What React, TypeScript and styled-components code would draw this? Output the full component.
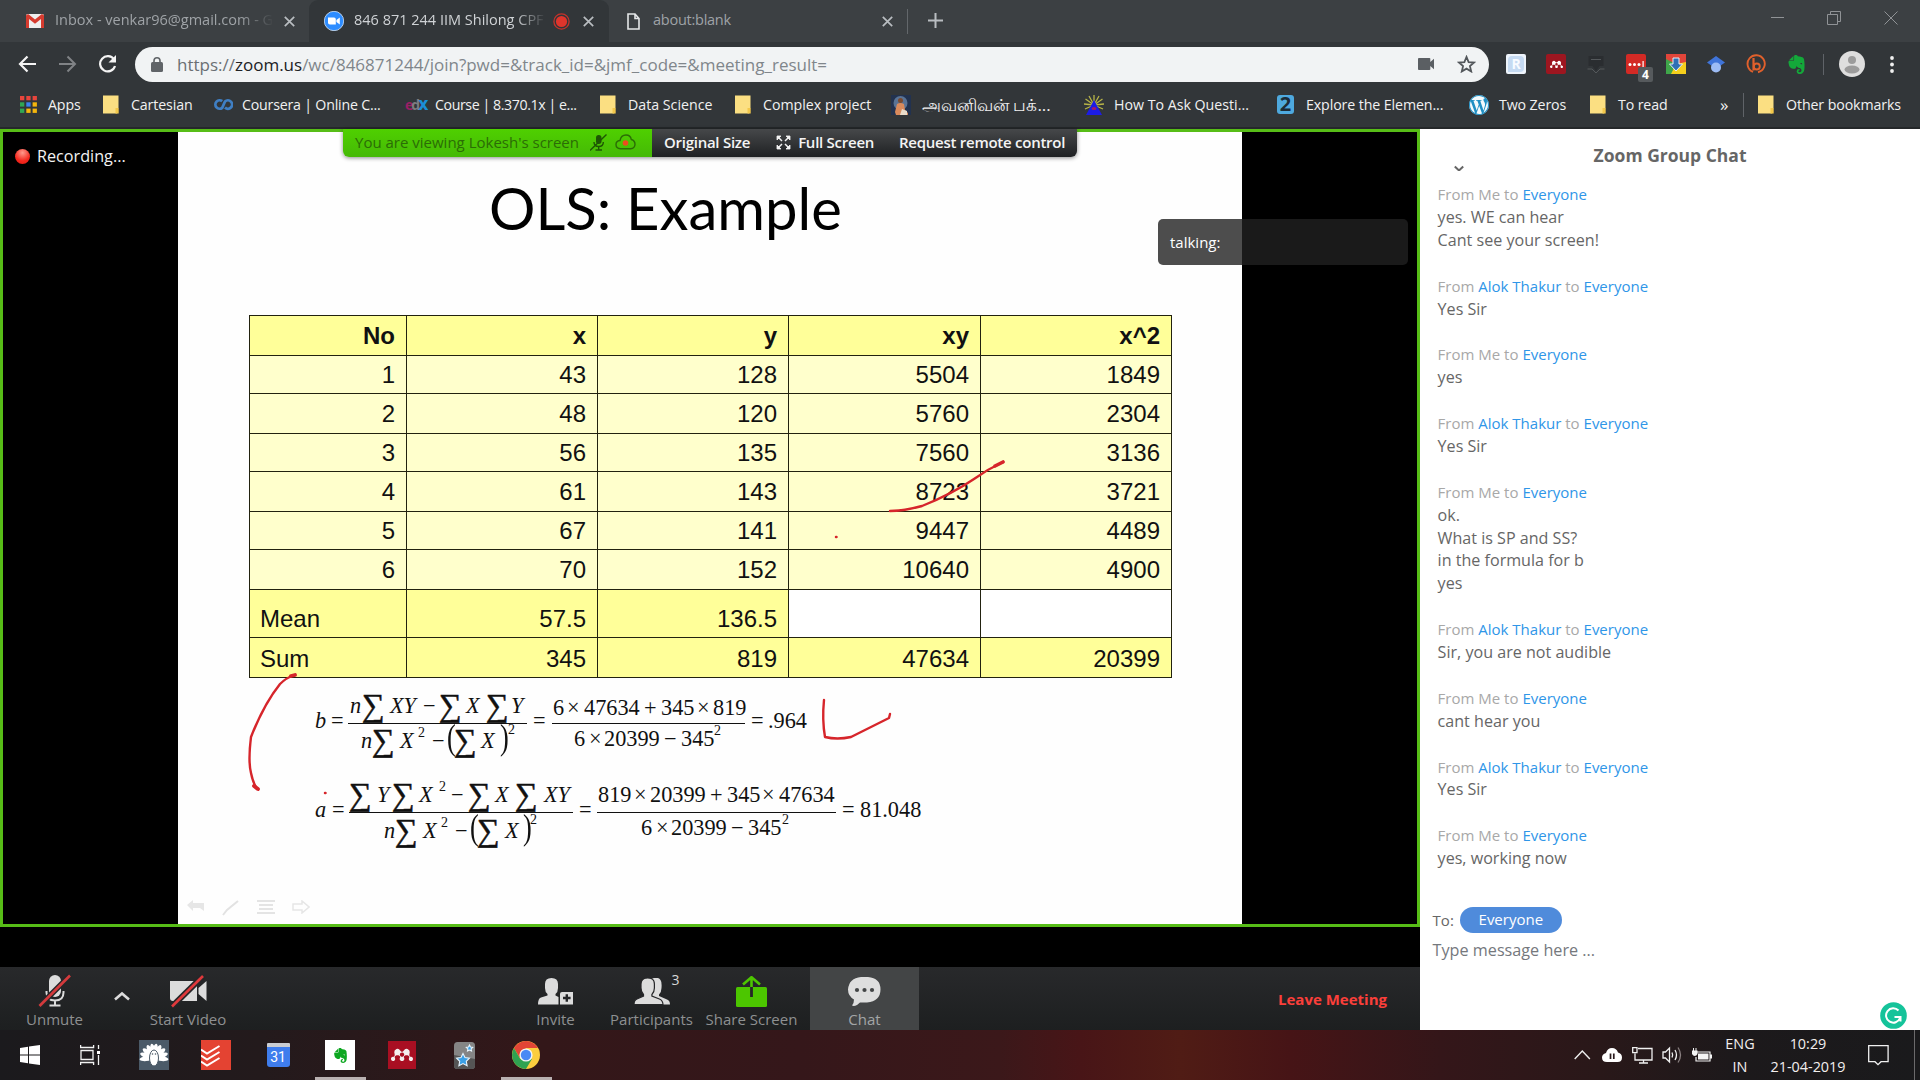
import React from 'react';
import styled, { createGlobalStyle, css } from 'styled-components';
import { SiEvernote, SiMendeley, SiWordpress } from 'react-icons/si';

const Global = createGlobalStyle`
  * { box-sizing: border-box; }
  html, body { margin: 0; background: #000; }
  body { font-family: "Open Sans", "Noto Sans", sans-serif; overflow: hidden; }
  svg { display: block; flex: none; }
`;

const Screen = styled.div`
  width: 1920px;
  height: 1080px;
  display: flex;
  flex-direction: column;
  overflow: hidden;
  white-space: nowrap;
`;

/* ---------- Browser chrome ---------- */
const TabStrip = styled.div`
  height: 42px;
  background: #3c4043;
  display: flex;
  align-items: flex-start;
  flex: none;
`;
const Tab = styled.div<{ $w: number; $active?: boolean; $pad: number }>`
  width: ${p => p.$w}px;
  height: 42px;
  padding-left: ${p => p.$pad}px;
  display: flex;
  align-items: center;
  color: ${p => (p.$active ? '#cfd2d5' : '#9fa3a7')};
  background: ${p => (p.$active ? '#323639' : '#3c4043')};
  ${p => p.$active && css`border-radius: 9px 9px 0 0;`}
`;
const TabLabel = styled.span<{ $w: number; $gap: number; $fade?: boolean; $ls?: number }>`
  width: ${p => p.$w}px;
  margin-left: ${p => p.$gap}px;
  font-size: 14.5px;
  letter-spacing: ${p => p.$ls || 0}px;
  line-height: 40px;
  height: 42px;
  overflow: hidden;
  ${p => p.$fade && css`mask-image: linear-gradient(90deg, #000 84%, transparent 100%);`}
`;
const Spacer = styled.span<{ $w?: number }>`
  ${p => (p.$w === undefined ? 'flex: 1;' : `width: ${p.$w}px; flex: none;`)}
`;
const TabDivider = styled.span`
  width: 1px;
  height: 25px;
  margin-top: 9px;
  background: #63676b;
`;
const NewTab = styled.span`
  margin: 13px 0 0 20px;
`;
const WindowButtons = styled.div`
  margin: 11px 22px 0 0;
  display: flex;
  gap: 43px;
  align-items: center;
`;

const NavBar = styled.div`
  height: 44px;
  background: #323639;
  display: flex;
  align-items: center;
  padding-left: 18px;
  flex: none;
`;
const NavIcons = styled.div`
  display: flex;
  gap: 21px;
  width: 117px;
  align-items: center;
`;
const AddressBar = styled.div`
  width: 1354px;
  height: 35px;
  border-radius: 18px;
  background: #f1f3f4;
  display: flex;
  align-items: center;
  padding: 0 13px 0 16px;
`;
const Url = styled.span`
  margin-left: 14px;
  flex: 1;
  font-size: 17px;
  line-height: 33px;
  color: #80868b;
  b { font-weight: 400; color: #202124; }
  i { font-style: normal; color: #6a6f73; }
`;
const AddressIcons = styled.span`
  display: flex;
  gap: 23px;
  align-items: center;
`;
const Extensions = styled.div`
  display: flex;
  margin-left: 7px;
`;
const ExtSlot = styled.span`
  width: 40px;
  height: 35px;
  position: relative;
  display: grid;
  place-items: center;
`;
const ExtTile = styled.span<{ $bg: string; $fg: string }>`
  width: 20px;
  height: 20px;
  border-radius: 2px;
  background: ${p => p.$bg};
  color: ${p => p.$fg};
  display: grid;
  place-items: center;
`;
const Rounded = styled.span`
  width: 16px;
  height: 16px;
  border-radius: 4px 4px 4px 0;
  background: #c5daf2;
  color: #f8fbff;
  font: 700 14px/15px "Open Sans", sans-serif;
  text-align: center;
`;
const ExtBadge = styled.span`
  position: absolute;
  left: 22px;
  top: 20px;
  width: 15px;
  height: 15px;
  border-radius: 2px;
  background: #565a5d;
  color: #fff;
  font: 700 12px/15px "Open Sans", sans-serif;
  text-align: center;
`;
const VRule = styled.span<{ $h: number; $mx: number }>`
  width: 1px;
  height: ${p => p.$h}px;
  margin: 0 ${p => p.$mx}px;
  background: #5f6368;
`;

const BookmarkBar = styled.div`
  height: 43px;
  background: #323639;
  border-bottom: 2px solid #25282a;
  padding: 0 0 4px 20px;
  display: flex;
  align-items: center;
  flex: none;
`;
const Bookmark = styled.div<{ $w: number }>`
  width: ${p => p.$w}px;
  display: flex;
  align-items: center;
  color: #f1f1f1;
`;
const BookmarkLabel = styled.span<{ $gap: number; $size?: number; $ls?: number }>`
  margin-left: ${p => p.$gap}px;
  font-size: ${p => p.$size || 14.2}px;
  letter-spacing: ${p => p.$ls ?? -0.12}px;
  line-height: 24px;
`;
const EdxMark = styled.span`
  width: 20px;
  font: 700 14px/20px "Open Sans", sans-serif;
  letter-spacing: -2px;
  color: #9b1f66;
  i { font-style: normal; color: #7a7c80; }
  b { color: #1b8fd6; }
`;
const TwoMark = styled.span`
  width: 17px;
  height: 19px;
  border-radius: 3px;
  background: #4ea9de;
  color: #1c2c38;
  font: 700 20px/18px "Open Sans", sans-serif;
  text-align: center;
`;

/* ---------- Meeting page ---------- */
const Page = styled.div`
  height: 901px;
  display: flex;
  flex: none;
`;
const Meeting = styled.div`
  width: 1420px;
  display: flex;
  flex-direction: column;
  background: #000;
`;
const Stage = styled.div`
  position: relative;
  height: 798px;
  border: 3px solid #57bd17;
  display: flex;
  background: #000;
`;
const Recording = styled.div`
  width: 175px;
  height: 48px;
  padding-left: 12px;
  display: flex;
  align-items: center;
  gap: 7px;
  color: #f2f2f2;
  font-size: 16.2px;
`;
const RecDot = styled.span`
  width: 15px;
  height: 15px;
  border-radius: 50%;
  background: radial-gradient(circle at 50% 25%, #ff9a8c, #f5281e 60%, #e01a12);
`;
const ShareBar = styled.div`
  position: absolute;
  left: 340px;
  top: -3px;
  height: 28px;
  display: flex;
  border-radius: 0 0 6px 6px;
  overflow: hidden;
  box-shadow: 0 1px 4px rgba(0, 0, 0, 0.45);
  font-size: 15px;
  line-height: 26px;
`;
const ShareStatus = styled.div`
  width: 309px;
  padding: 0 0 2px 12px;
  display: flex;
  align-items: center;
  background: linear-gradient(#4fd000, #45b906);
  color: #2b6d06;
`;
const ShareActions = styled.div`
  width: 425px;
  padding: 0 0 2px 12px;
  display: flex;
  align-items: center;
  background: linear-gradient(#46484a, #1f2123);
  color: #f4f4f4;
  font-weight: 600;
  letter-spacing: -0.26px;
`;
const Talking = styled.div`
  position: absolute;
  left: 1155px;
  top: 87px;
  width: 250px;
  height: 46px;
  padding-left: 12px;
  border-radius: 5px;
  background: rgba(32, 32, 32, 0.8);
  color: #fff;
  font-size: 15px;
  line-height: 46px;
`;

/* ---------- Slide ---------- */
const Slide = styled.div`
  position: relative;
  width: 1064px;
  height: 792px;
  padding: 41px 70px 0 71px;
  background: #fefefe;
`;
const SlideTitle = styled.h1`
  margin: 0 0 72px 240px;
  font: 400 58px/70px Lato, "Open Sans", sans-serif;
  color: #000;
`;
const DataTable = styled.div`
  display: grid;
  grid-template-columns: 157px 191px 191px 192px 191px;
  grid-template-rows: 40px 38px 40px 38px 40px 38px 40px 48px 40px;
  width: 923px;
  border: solid #22220f;
  border-width: 1px 0 0 1px;
`;
const Cell = styled.div<{ $tone: 'head' | 'body' | 'blank'; $left?: boolean; $bold?: boolean; $drop?: number }>`
  border: solid #22220f;
  border-width: 0 1px 1px 0;
  padding: ${p => p.$drop || 0}px 11px 0 10px;
  display: flex;
  align-items: center;
  justify-content: ${p => (p.$left ? 'flex-start' : 'flex-end')};
  background: ${p => ({ head: '#ffff99', body: '#ffffcc', blank: '#ffffff' })[p.$tone]};
  font: ${p => (p.$bold ? 700 : 400)} 24px/36px "Liberation Sans", Arial, sans-serif;
  color: #111;
`;
const Formulas = styled.div`
  padding: 11px 0 0 66px;
  font: 22.3px/34px "Liberation Serif", "Times New Roman", serif;
  color: #111;
`;
const Equation = styled.div`
  height: 89px;
  display: flex;
`;
const Term = styled.span<{ $w: number }>`
  width: ${p => p.$w}px;
  margin-top: 15px;
`;
const Fraction = styled.div<{ $w: number; $gap: number }>`
  width: ${p => p.$w}px;
  margin-right: ${p => p.$gap}px;
`;
const Numerator = styled.div<{ $pad: number; $drop: number }>`
  height: 35px;
  padding: ${p => p.$drop}px 0 0 ${p => p.$pad}px;
  border-bottom: 1px solid #111;
  display: flex;
`;
const Denominator = styled.div<{ $pad: number; $rise: number }>`
  height: 34px;
  margin-top: ${p => -p.$rise}px;
  padding-left: ${p => p.$pad}px;
  display: flex;
`;
const Tok = styled.span<{ $w: number; $k?: string }>`
  width: ${p => p.$w}px;
  flex: none;
  height: 34px;
  ${p => p.$k === 'i' && css`font-style: italic;`}
  ${p => p.$k === 's' && css`font-size: 32px; line-height: 32px; -webkit-text-stroke: 0.5px #111;`}
  ${p => p.$k === 'p' && css`font-size: 35px; line-height: 28px; transform: scaleX(0.75); transform-origin: 0 0;`}
  ${p => p.$k === '2' && css`font-size: 14px; line-height: 17px;`}
  ${p => p.$k === '^' && css`font-size: 14px; line-height: 11px;`}
`;
const Ink = styled.svg`
  position: absolute;
  left: 0;
  top: 0;
`;
const SlideNav = styled.div`
  position: absolute;
  left: 9px;
  bottom: 8px;
  display: flex;
  gap: 17px;
`;

/* ---------- Meeting toolbar ---------- */
const Controls = styled.div`
  height: 63px;
  margin-top: 40px;
  display: flex;
  background: linear-gradient(#28292b, #1d1f20);
`;
const Control = styled.div<{ $w: number; $active?: boolean; $ml?: number }>`
  position: relative;
  width: ${p => p.$w}px;
  margin-left: ${p => p.$ml || 0}px;
  padding-top: 6px;
  display: flex;
  flex-direction: column;
  align-items: center;
  background: ${p => (p.$active ? '#434546' : 'transparent')};
  color: ${p => (p.$active ? '#a3a5a6' : '#8e9091')};
`;
const ControlIcon = styled.div`
  height: 36px;
  display: flex;
  align-items: center;
`;
const ControlLabel = styled.span`
  font-size: 15px;
  line-height: 21px;
`;
const Count = styled.span`
  position: absolute;
  left: 70px;
  top: 3px;
  color: #d8d8d8;
  font-size: 14px;
  line-height: 20px;
`;
const Leave = styled.span`
  margin: 0 33px 0 auto;
  color: #fb3f3a;
  font-size: 15px;
  font-weight: 700;
  line-height: 65px;
`;

/* ---------- Chat ---------- */
const Chat = styled.div`
  width: 500px;
  padding: 0 0 0 17.6px;
  background: #fff;
  display: flex;
  flex-direction: column;
`;
const ChatHeader = styled.div`
  height: 54px;
  display: flex;
`;
const ChatTitle = styled.span`
  margin-left: 130px;
  font-size: 17.5px;
  font-weight: 700;
  line-height: 52px;
  color: #666;
`;
const Message = styled.div`
  margin-bottom: 22.9px;
  color: #666;
  font-size: 16.1px;
  line-height: 22.9px;
`;
const From = styled.div`
  color: #a8a8a8;
  font-size: 15px;
  line-height: 22.9px;
  b { font-weight: 400; color: #2f96e8; }
`;
const Recipient = styled.div`
  display: flex;
  align-items: center;
  margin: 13px 0 0 -5px;
  height: 28px;
  font-size: 15px;
  color: #666;
`;
const Pill = styled.span`
  width: 102px;
  height: 26px;
  margin-left: 6px;
  border-radius: 13px;
  background: #4f8bdb;
  color: #fff;
  text-align: center;
  line-height: 25px;
`;
const ChatInput = styled.div`
  margin: 5px 0 0 -5px;
  font-size: 16.2px;
  line-height: 22px;
  color: #75787d;
`;
const Grammar = styled.span`
  margin: auto 13px 1px auto;
`;

/* ---------- Taskbar ---------- */
const Taskbar = styled.div`
  height: 50px;
  display: flex;
  background: linear-gradient(90deg, #1b1a1d 0, #231a1c 260px, #331719 540px, #35171a 800px, #3b181a 1000px, #481517 1080px, #501c15 1180px, #461416 1290px, #341619 1440px, #291819 1600px, #1c191b 1740px, #1a1a1c 1920px);
`;
const TaskSlot = styled.span<{ $w: number; $open?: boolean }>`
  width: ${p => p.$w}px;
  height: 50px;
  display: grid;
  place-items: center;
  ${p => p.$open && css`
    background: linear-gradient(#b9b1b1, #b9b1b1) center bottom / 51px 3px no-repeat;
  `}
`;
const Tile = styled.span<{ $s: number; $bg: string; $fg: string }>`
  width: ${p => p.$s}px;
  height: ${p => p.$s}px;
  display: grid;
  place-items: center;
  background: ${p => p.$bg};
  color: ${p => p.$fg};
`;
const CalendarTile = styled.span`
  width: 23px;
  height: 24px;
  border-top: 4px solid #c9ccd2;
  border-radius: 1px 1px 3px 3px;
  background: #3f7ded;
  color: #fff;
  font: 14px/20px Roboto, "Open Sans", sans-serif;
  text-align: center;
`;
const TrayText = styled.div<{ $w: number }>`
  width: ${p => p.$w}px;
  padding-top: 2px;
  text-align: center;
  color: #f2eeee;
  font-size: 14.4px;
  line-height: 23px;
`;
const EdgeLine = styled.span`
  width: 1px;
  margin-left: 17px;
  background: #6b6a6b;
`;

/* ---------- Drawings ---------- */
const Close = () => (
  <svg width="11" height="11" viewBox="0 0 11 11" stroke="#b9bdc1" strokeWidth="1.7"><path d="M.8.8l9.4 9.4M10.2.8L.8 10.2" /></svg>
);
const Folder = () => (
  <svg width="16" height="19" viewBox="0 0 16 19"><path d="M0 .5h15.500v12.500l-1.200 1v4.500H0z" fill="#fbdf82" /><path d="M12.500 13h3.200v5.500h-3.200z" fill="#f3c84b" /></svg>
);
const GmailIcon = () => (
  <svg width="18" height="14" viewBox="0 0 18 14"><rect width="18" height="14" rx="1.500" fill="#eee" /><path d="M0 1.500v12.500h3V5l6 4.800L15 5v9h3V1.500Q17 0 15.500.3L9 5.500 2.500.3Q1 0 0 1.500z" fill="#d63b2f" /></svg>
);
const ZoomIcon = () => (
  <svg width="20" height="20" viewBox="0 0 20 20"><circle cx="10" cy="10" r="9.700" fill="#2d8cff" stroke="#d7e8fb" strokeWidth=".8" /><path d="M4 6.500h6q1.800 0 1.800 1.800v5.200H5.800Q4 13.500 4 11.700zM12.400 9l3.400-2.500v7l-3.400-2.500z" fill="#fff" /></svg>
);
const CourseraIcon = () => (
  <svg width="19" height="13" viewBox="0 0 19 13" fill="none" stroke="#3f7fc4" strokeWidth="2.800"><path d="M8.200 3.200A4.200 4.200 0 1 0 8.200 9.800L11 3.500A4.200 4.200 0 1 1 11 9.600" /></svg>
);
const GridIcon = () => (
  <svg width="17" height="17" viewBox="0 0 17 17">
    {['#e8453c', '#e8453c', '#e8453c', '#31a753', '#3b82f0', '#f5b60d', '#31a753', '#f5b60d', '#f5b60d'].map((c, i) => (
      <rect key={i} x={(i % 3) * 6.3} y={Math.floor(i / 3) * 6.3} width="4.300" height="4.300" fill={c} />
    ))}
  </svg>
);
const ChromeLogo = () => (
  <svg width="28" height="28" viewBox="0 0 28 28">
    <circle cx="14" cy="14" r="14" fill="#fccd3e" />
    <path d="M14 7h12.100A14 14 0 0 0 1.900 7l6 10z" fill="#e24536" />
    <path d="M1.900 7A14 14 0 0 0 14 28l6.200-10.600L14 20 8 17.500z" fill="#2fa251" />
    <circle cx="14" cy="14" r="6.600" fill="#f4f4f4" /><circle cx="14" cy="14" r="5.200" fill="#4a8af4" />
  </svg>
);
const MicOff = () => (
  <svg width="34" height="34" viewBox="0 0 34 34">
    <rect x="11" y="1" width="12" height="22" rx="6" fill="#dcdcdc" />
    <path d="M8.500 17v1.500q0 8 8.500 8t8.500-8V17M17 26v5M11.500 31.500h11" stroke="#dcdcdc" strokeWidth="2" fill="none" />
    <path d="M1.500 32L32 1.500" stroke="#252628" strokeWidth="5.500" /><path d="M1.500 32L32 1.500" stroke="#d43a3c" strokeWidth="2.600" />
  </svg>
);
const VideoOff = () => (
  <svg width="37" height="33" viewBox="0 0 37 33">
    <path d="M0 6h27v20H3q-3 0-3-3zM28.500 13L36.500 6v20L28.500 19z" fill="#dcdcdc" />
    <path d="M2 31.500L33 1" stroke="#252628" strokeWidth="6" /><path d="M2 31.500L33 1" stroke="#e0393c" strokeWidth="2.600" />
  </svg>
);
const InviteIcon = () => (
  <svg width="36" height="27" viewBox="0 0 36 27" fill="#dcdcdc">
    <path d="M7 6q0-6 6.500-6t6.500 6v4q0 4-2.500 6v1.500l3 1.500v7.500H0q0-6 3-7l6.500-2V16Q7 14 7 10z" />
    <path d="M24 14h11v12.500H22V16q0-2 2-2z" /><path d="M28.800 16.200v7.600M25 20h7.600" stroke="#252628" strokeWidth="2.400" />
  </svg>
);
const PeopleIcon = () => (
  <svg width="36" height="27" viewBox="0 0 36 27" fill="#dcdcdc">
    <path d="M13 1q7-3 9.500 1 1.500 2 1 8 0 4-2.500 6.500V18l8 3.500q3 1 3 5H10z" transform="translate(4 0)" />
    <path d="M7 6q0-6 6.700-6t6.700 6v4q0 4-2.500 6.500V18l7.500 3q3.600 1.500 3.600 5.700H0q0-4.700 3-5.700l6.500-3v-1.500Q7 14 7 10z" stroke="#252628" strokeWidth="1.200" />
  </svg>
);
const ShareIcon = () => (
  <svg width="31" height="31" viewBox="0 0 31 31"><path d="M1.500 11h28q1.500 0 1.500 1.500V29.500q0 1.500-1.500 1.500h-28Q0 31 0 29.500v-17Q0 11 1.500 11z" fill="#4cc600" /><path d="M15.500 11V1.500M7 8.500L15.500 1.200 24 8.500" stroke="#4cc600" strokeWidth="2.600" fill="none" /><path d="M15.500 11v10" stroke="#252628" strokeWidth="2.800" /></svg>
);
const BubbleIcon = () => (
  <svg width="33" height="29" viewBox="0 0 33 29"><path d="M13 0h7q12.500 1 12.500 12.500T19 25.500q-5 0-7 0l-3 2.500q-3 1.500-5 .5 2-2 2-6Q0 19 0 12.500 1 1 13 0z" fill="#dedede" /><g fill="#434546"><circle cx="9" cy="13" r="2.100" /><circle cx="16.500" cy="13" r="2.100" /><circle cx="24" cy="13" r="2.100" /></g></svg>
);

const rows = [
  ['1', '43', '128', '5504', '1849'], ['2', '48', '120', '5760', '2304'], ['3', '56', '135', '7560', '3136'],
  ['4', '61', '143', '8723', '3721'], ['5', '67', '141', '9447', '4489'], ['6', '70', '152', '10640', '4900'],
];

type Token = [string, number, string?];
const Tokens = ({ list }: { list: Token[] }) => <>{list.map(([t, w, k], i) => <Tok key={i} $w={w} $k={k}>{t}</Tok>)}</>;

const messages: { by?: string; lines: string[] }[] = [
  { lines: ['yes. WE can hear', 'Cant see your screen!'] },
  { by: 'Alok Thakur', lines: ['Yes Sir'] },
  { lines: ['yes'] },
  { by: 'Alok Thakur', lines: ['Yes Sir'] },
  { lines: ['ok.', 'What is SP and SS?', 'in the formula for b', 'yes'] },
  { by: 'Alok Thakur', lines: ['Sir, you are not audible'] },
  { lines: ['cant hear you'] },
  { by: 'Alok Thakur', lines: ['Yes Sir'] },
  { lines: ['yes, working now'] },
];

const Browser = () => (
  <>
    <TabStrip>
      <Tab $w={309} $pad={26}>
        <GmailIcon /><TabLabel $w={219} $gap={11} $fade>Inbox - venkar96@gmail.com - G</TabLabel><Spacer $w={10} /><Close />
      </Tab>
      <Tab $w={300} $pad={15} $active>
        <ZoomIcon /><TabLabel $w={192} $gap={10} $fade>846 871 244 IIM Shilong CPF</TabLabel><Spacer $w={7} />
        <svg width="17" height="17" viewBox="0 0 17 17"><circle cx="8.500" cy="8.500" r="7.600" fill="none" stroke="#c5322b" strokeWidth="1.300" /><circle cx="8.500" cy="8.500" r="5.600" fill="#e0352c" /></svg>
        <Spacer $w={13} /><Close />
      </Tab>
      <Tab $w={298} $pad={18}>
        <svg width="13" height="17" viewBox="0 0 13 17"><path d="M1 1h7l4 4.500V16H1zM8 1v4.500h4" fill="none" stroke="#e4e6e8" strokeWidth="1.600" /></svg>
        <TabLabel $w={218} $gap={13} $ls={-0.25}>about:blank</TabLabel><Spacer $w={11} /><Close />
      </Tab>
      <TabDivider />
      <NewTab><svg width="15" height="15" viewBox="0 0 15 15" stroke="#b9bdc1" strokeWidth="2"><path d="M7.500 0v15M0 7.500h15" /></svg></NewTab>
      <Spacer />
      <WindowButtons>
        <svg width="13" height="14" stroke="#909396"><path d="M0 6.500h13" /></svg>
        <svg width="14" height="14" fill="none" stroke="#909396"><path d="M.5 3.500h10v10H.5zM3.500 3V.5h10v10H11" /></svg>
        <svg width="14" height="14" stroke="#909396"><path d="M.5.5l13 13M13.500.5l-13 13" /></svg>
      </WindowButtons>
    </TabStrip>
    <NavBar>
      <NavIcons>
        <svg width="19" height="18" viewBox="0 0 19 18" fill="none" stroke="#f4f4f4" strokeWidth="2.200"><path d="M18 9H2.500M9.500 1.500L2 9l7.500 7.500" /></svg>
        <svg width="19" height="18" viewBox="0 0 19 18" fill="none" stroke="#808386" strokeWidth="2"><path d="M1 9h15.500M9.500 1.500L17 9l-7.500 7.500" /></svg>
        <svg width="19" height="18" viewBox="0 0 19 18" fill="none" stroke="#f4f4f4" strokeWidth="2.200"><path d="M16 4.500A7.600 7.600 0 1 0 17 11" /><path d="M18 0v7.500h-7.500z" fill="#f4f4f4" stroke="none" /></svg>
      </NavIcons>
      <AddressBar>
        <svg width="12" height="15" viewBox="0 0 12 15"><rect y="5" width="12" height="10" rx="1.500" fill="#606468" /><path d="M3 6V3.800a3 3 0 0 1 6 0V6" fill="none" stroke="#606468" strokeWidth="1.600" /></svg>
        <Url><i>https://</i><b>zoom.us</b>/wc/846871244/join?pwd=&amp;track_id=&amp;jmf_code=&amp;meeting_result=</Url>
        <AddressIcons>
          <svg width="16" height="12" viewBox="0 0 16 12" fill="#5b5f63"><path d="M1 0h10.500q.8 0 .8.800V4L16 .8v10.400L12.300 8v3.200q0 .8-.8.800H1q-1 0-1-.8V.8Q0 0 1 0z" /></svg>
          <svg width="19" height="18" viewBox="0 0 24 23" fill="none" stroke="#53575b" strokeWidth="2.300"><path d="M12 2.500l2.700 6.500 7 .6-5.300 4.600 1.600 6.800-6-3.600L6 21l1.600-6.800L2.300 9.600l7-.6z" /></svg>
        </AddressIcons>
      </AddressBar>
      <Extensions>
        <ExtSlot><ExtTile $bg="#eef4fb" $fg="#a9c8ea"><Rounded>R</Rounded></ExtTile></ExtSlot>
        <ExtSlot><ExtTile $bg="#9d1620" $fg="#fff"><SiMendeley size={13} /></ExtTile></ExtSlot>
        <ExtSlot><svg width="18" height="19" viewBox="0 0 18 19"><path d="M1.500 1h15v10h-4L9 16l-3.500-5h-4z" fill="#2a2d30" /><path d="M4 4.500h10M.5 14H5l4 4 4-4h4.500" stroke="#54585b" fill="none" /></svg></ExtSlot>
        <ExtSlot><ExtTile $bg="#d32a25" $fg="#fff"><svg width="16" height="6" fill="#fff"><circle cx="2" cy="3.500" r="1.500" /><circle cx="6.500" cy="3.500" r="1.500" /><circle cx="11" cy="3.500" r="1.500" /><rect x="14.500" width="1.200" height="6" /></svg></ExtTile><ExtBadge>4</ExtBadge></ExtSlot>
        <ExtSlot><svg width="20" height="20" viewBox="0 0 20 20"><rect width="20" height="20" fill="#f5cf1c" /><path d="M0 0h20v8L10 10 0 20z" fill="#e2453a" /><path d="M0 5l10 5-5 10H0z" fill="#3fa64a" /><path d="M7 4h6v6h3.500L10 17 3.500 10H7z" fill="#2f6fb5" stroke="#e8eef5" /></svg></ExtSlot>
        <ExtSlot><svg width="18" height="17" viewBox="0 0 18 17"><path d="M9 0L18 6.500 13 10H5L0 6.500z" fill="#3f74d9" /><circle cx="9" cy="11.500" r="5" fill="#9dbcf5" /></svg></ExtSlot>
        <ExtSlot><svg width="20" height="20" viewBox="0 0 20 20" fill="none" stroke="#e0602c" strokeWidth="1.900"><path d="M7 17.800A8.600 8.600 0 1 1 12 18.200" /><path d="M7.500 4v12.500" strokeWidth="2.200" /><circle cx="10.800" cy="12.500" r="3" /></svg></ExtSlot>
        <ExtSlot><SiEvernote size={19} color="#14a83a" /></ExtSlot>
      </Extensions>
      <VRule $h={21} $mx={7} />
      <Spacer $w={8} />
      <svg width="26" height="26" viewBox="0 0 26 26"><circle cx="13" cy="13" r="13" fill="#dedede" /><circle cx="13" cy="9" r="4" fill="#9b9b9b" /><ellipse cx="13" cy="18.500" rx="7.500" ry="4" fill="#9b9b9b" /></svg>
      <Spacer $w={25} />
      <svg width="4" height="17" fill="#f0f0f0"><circle cx="2" cy="2" r="1.900" /><circle cx="2" cy="8.500" r="1.900" /><circle cx="2" cy="15" r="1.900" /></svg>
    </NavBar>
    <BookmarkBar>
      <Bookmark $w={83}><GridIcon /><BookmarkLabel $gap={11}>Apps</BookmarkLabel></Bookmark>
      <Bookmark $w={111}><Folder /><BookmarkLabel $gap={12}>Cartesian</BookmarkLabel></Bookmark>
      <Bookmark $w={191}><CourseraIcon /><BookmarkLabel $gap={9} $ls={-0.2}>Coursera | Online C...</BookmarkLabel></Bookmark>
      <Bookmark $w={195}><EdxMark>e<i>d</i><b>X</b></EdxMark><BookmarkLabel $gap={10} $ls={-0.42}>Course | 8.370.1x | e...</BookmarkLabel></Bookmark>
      <Bookmark $w={135}><Folder /><BookmarkLabel $gap={12} $ls={0}>Data Science</BookmarkLabel></Bookmark>
      <Bookmark $w={156}><Folder /><BookmarkLabel $gap={12} $ls={0}>Complex project</BookmarkLabel></Bookmark>
      <Bookmark $w={193}>
        <svg width="20" height="20" viewBox="0 0 20 20"><rect width="20" height="20" fill="#22324f" /><circle cx="9.500" cy="8" r="7" fill="#7f9fc4" opacity=".6" /><circle cx="9.500" cy="5.500" r="2.500" fill="#7a4a30" /><path d="M6 9q3.500-2 7 0l1 6 3 3v2H5l-1-3z" fill="#d98a5c" /><path d="M11 14l5 2v4H9z" fill="#e9dccb" /></svg>
        <BookmarkLabel $gap={11} $size={16.9} $ls={0}>அவனிவன் பக்...</BookmarkLabel>
      </Bookmark>
      <Bookmark $w={193}>
        <svg width="20" height="20" viewBox="0 0 20 20"><g stroke="#b8b548" strokeWidth="1.300"><path d="M10 10V0M10 10L5 1M10 10L15 1M10 10L1.500 4M10 10L18.500 4M10 10L0 9M10 10L20 9M10 10L1 14M10 10L19 14" /></g><path d="M10 5l8 15H2z" fill="#1c1ce6" /><ellipse cx="10" cy="13.500" rx="2.500" ry="1.500" fill="#a3196b" /></svg>
        <BookmarkLabel $gap={10} $ls={0}>How To Ask Questi...</BookmarkLabel>
      </Bookmark>
      <Bookmark $w={192}><TwoMark>2</TwoMark><BookmarkLabel $gap={12} $ls={-0.1}>Explore the Elemen...</BookmarkLabel></Bookmark>
      <Bookmark $w={121}><svg width="20" height="20"><circle cx="10" cy="10" r="10" fill="#f4fafc" /><SiWordpress size={20} color="#1f8fc4" /></svg><BookmarkLabel $gap={10}>Two Zeros</BookmarkLabel></Bookmark>
      <Bookmark $w={130}><Folder /><BookmarkLabel $gap={12}>To read</BookmarkLabel></Bookmark>
      <Bookmark $w={16}><BookmarkLabel $gap={0} $size={17}>»</BookmarkLabel></Bookmark>
      <VRule $h={24} $mx={7} />
      <Spacer $w={7} />
      <Bookmark $w={160}><Folder /><BookmarkLabel $gap={12} $ls={-0.1}>Other bookmarks</BookmarkLabel></Bookmark>
    </BookmarkBar>
  </>
);

const SlideView = () => (
  <Slide>
    <SlideTitle>OLS: Example</SlideTitle>
    <DataTable>
      {['No', 'x', 'y', 'xy', 'x^2'].map(h => <Cell key={h} $tone="head" $bold>{h}</Cell>)}
      {rows.map(r => r.map((v, i) => <Cell key={r[0] + i} $tone="body">{v}</Cell>))}
      <Cell $tone="head" $left $drop={11}>Mean</Cell>
      <Cell $tone="head" $drop={11}>57.5</Cell>
      <Cell $tone="head" $drop={11}>136.5</Cell>
      <Cell $tone="blank" /><Cell $tone="blank" />
      <Cell $tone="head" $left $drop={2}>Sum</Cell>
      {['345', '819', '47634', '20399'].map(v => <Cell key={v} $tone="head" $drop={2}>{v}</Cell>)}
    </DataTable>
    <Formulas>
      <Equation>
        <Term $w={16}><i>b</i></Term><Term $w={17}>=</Term>
        <Fraction $w={179} $gap={6}>
          <Numerator $pad={2} $drop={0}><Tokens list={[['n', 12, 'i'], ['∑', 28, 's'], ['XY', 33, 'i'], ['−', 16], ['∑', 27, 's'], ['X', 20, 'i'], ['∑', 25, 's'], ['Y', 13, 'i']]} /></Numerator>
          <Denominator $pad={13} $rise={0}><Tokens list={[['n', 11, 'i'], ['∑', 28, 's'], ['X', 18, 'i'], ['2', 14, '2'], ['−', 15], ['(', 7, 'p'], ['∑', 27, 's'], ['X', 19, 'i'], [')', 8, 'p'], ['2', 8, '^']]} /></Denominator>
        </Fraction>
        <Term $w={19}>=</Term>
        <Fraction $w={193} $gap={6}>
          <Numerator $pad={1} $drop={2}><Tokens list={[['6', 14], ['×', 17], ['47634', 60], ['+', 17], ['345', 36], ['×', 16], ['819', 34]]} /></Numerator>
          <Denominator $pad={22} $rise={2}><Tokens list={[['6', 15], ['×', 15], ['20399', 60], ['−', 17], ['345', 33], ['2', 8, '2']]} /></Denominator>
        </Fraction>
        <Term $w={17}>=</Term><Term $w={40}>.964</Term>
      </Equation>
      <Equation>
        <Term $w={17}><i>a</i></Term><Term $w={17}>=</Term>
        <Fraction $w={224} $gap={6}>
          <Numerator $pad={1} $drop={-1}><Tokens list={[['∑', 28, 's'], ['Y', 15, 'i'], ['∑', 27, 's'], ['X', 20, 'i'], ['2', 12, '2'], ['−', 17], ['∑', 27, 's'], ['X', 20, 'i'], ['∑', 29, 's'], ['XY', 30, 'i']]} /></Numerator>
          <Denominator $pad={35} $rise={-1}><Tokens list={[['n', 11, 'i'], ['∑', 28, 's'], ['X', 18, 'i'], ['2', 14, '2'], ['−', 15], ['(', 7, 'p'], ['∑', 28, 's'], ['X', 18, 'i'], [')', 7, 'p'], ['2', 8, '^']]} /></Denominator>
        </Fraction>
        <Term $w={18}>=</Term>
        <Fraction $w={239} $gap={6}>
          <Numerator $pad={1} $drop={0}><Tokens list={[['819', 36], ['×', 16], ['20399', 60], ['+', 17], ['345', 35], ['×', 17], ['47634', 58]]} /></Numerator>
          <Denominator $pad={44} $rise={2}><Tokens list={[['6', 15], ['×', 15], ['20399', 60], ['−', 17], ['345', 34], ['2', 8, '2']]} /></Denominator>
        </Fraction>
        <Term $w={18}>=</Term><Term $w={64}>81.048</Term>
      </Equation>
    </Formulas>
    <Ink width="1064" height="792" viewBox="178 132 1064 792" fill="none" stroke="#d6252b" strokeWidth="2.400" strokeLinecap="round" strokeLinejoin="round">
      <path d="M294 675q-8 3-14 9-16 20-29 53-3 24 0 36 2 10 6 16" />
      <path d="M291 676l4-1M254 786l4 3" strokeWidth="3.800" />
      <path d="M824 700q-2 20 1 37 12 3 26 0l38-19 1-4" />
      <path d="M890 511q14 0 32-5 30-12 52-27 14-10 29-17" />
      <path d="M995 466l8-4" strokeWidth="3.600" />
      <path d="M325 793h.5M836 537h.5" strokeWidth="2.500" />
    </Ink>
    <SlideNav>
      <svg width="18" height="14" fill="#e6e6e6"><path d="M0 5l6-5v3h11v8l-4-3H6v3z" /></svg>
      <svg width="18" height="16" fill="none" stroke="#e2e2e2" strokeWidth="2"><path d="M1 15l4-5L16 1" /></svg>
      <svg width="18" height="14" fill="none" stroke="#e4e4e4" strokeWidth="2"><path d="M0 1h18M2 5h14M2 9h14M0 13h18" /></svg>
      <svg width="18" height="14" fill="none" stroke="#e6e6e6" strokeWidth="1.500"><path d="M1 4h9V1l7 6-7 6v-3H1z" /></svg>
    </SlideNav>
  </Slide>
);

const MeetingView = () => (
  <Meeting>
    <Stage>
      <Recording><RecDot />Recording...</Recording>
      <SlideView />
      <ShareBar>
        <ShareStatus>
          You are viewing Lokesh's screen
          <Spacer $w={11} />
          <svg width="17" height="17" viewBox="0 0 17 17" stroke="#1e5604"><rect x="6" y="1" width="5.500" height="9" rx="2.700" fill="#1e5604" stroke="none" /><path d="M4 8q0 4.500 4.700 4.500T13.300 8M8.700 12.500V16M5.500 16h6.500M0 16.500L16.500.5" fill="none" strokeWidth="1.400" /></svg>
          <Spacer $w={8} />
          <svg width="21" height="16" viewBox="0 0 21 16"><path d="M5.500 14.800Q1 14.500 1 10.500 1 7 5 6.500 6 1 11 1q4.500 0 5.300 4.500Q20 6.500 20 10.300q0 4-4.500 4.500z" fill="none" stroke="#2b6d06" strokeWidth="1.400" /><circle cx="10.500" cy="9" r="2.800" fill="#ee4b1f" /></svg>
        </ShareStatus>
        <ShareActions>
          Original Size
          <Spacer $w={26} />
          <svg width="15" height="15" viewBox="0 0 15 15" fill="#f4f4f4" stroke="#f4f4f4" strokeWidth="1.500"><path d="M1 5V1h4zM10 1h4v4zM14 10v4h-4zM5 14H1v-4z" strokeWidth=".8" /><path d="M2 2l4 4M13 2L9 6M13 13L9 9M2 13l4-4" /></svg>
          <Spacer $w={7} />
          Full Screen
          <Spacer $w={25} />
          Request remote control
        </ShareActions>
      </ShareBar>
      <Talking>talking:</Talking>
    </Stage>
    <Controls>
      <Control $w={109}><ControlIcon><MicOff /></ControlIcon><ControlLabel>Unmute</ControlLabel></Control>
      <Control $w={25}><ControlIcon><svg width="16" height="20" fill="none" stroke="#dcdcdc" strokeWidth="2.600"><path d="M1 18.500l7-6 7 6" /></svg></ControlIcon></Control>
      <Control $w={108}><ControlIcon><VideoOff /></ControlIcon><ControlLabel>Start Video</ControlLabel></Control>
      <Control $w={92} $ml={267.5}><ControlIcon><InviteIcon /></ControlIcon><ControlLabel>Invite</ControlLabel></Control>
      <Control $w={100}><ControlIcon><PeopleIcon /></ControlIcon><Count>3</Count><ControlLabel>Participants</ControlLabel></Control>
      <Control $w={100}><ControlIcon><ShareIcon /></ControlIcon><ControlLabel>Share Screen</ControlLabel></Control>
      <Control $w={109} $ml={8.5} $active><ControlIcon><BubbleIcon /></ControlIcon><ControlLabel>Chat</ControlLabel></Control>
      <Leave>Leave Meeting</Leave>
    </Controls>
  </Meeting>
);

const ChatPanel = () => (
  <Chat>
    <ChatHeader>
      <Spacer $w={16} />
      <svg width="10" height="42" fill="none" stroke="#666" strokeWidth="2"><path d="M.8 37.500l4.200 4 4.200-4" /></svg>
      <ChatTitle>Zoom Group Chat</ChatTitle>
    </ChatHeader>
    {messages.map((m, i) => (
      <Message key={i}>
        <From>From {m.by ? <b>{m.by}</b> : 'Me'} to <b>Everyone</b></From>
        {m.lines.map(l => <div key={l}>{l}</div>)}
      </Message>
    ))}
    <Recipient>To:<Pill>Everyone</Pill></Recipient>
    <ChatInput>Type message here ...</ChatInput>
    <Grammar>
      <svg width="27" height="27" viewBox="0 0 27 27"><circle cx="13.500" cy="13.500" r="13.300" fill="#15c39a" /><path d="M18.500 8.500A7.200 7.200 0 1 0 20 16M14.500 15h6v4.500" fill="none" stroke="#fff" strokeWidth="2" /></svg>
    </Grammar>
  </Chat>
);

const SystemBar = () => (
  <Taskbar>
    <TaskSlot $w={60}><svg width="20" height="20" viewBox="0 0 20 20" fill="#fff"><path d="M0 3l8-1.200v7.700H0zM9 1.600L20 0v9.500H9zM0 10.500h8v7.700L0 17zM9 10.500h11V20L9 18.400z" /></svg></TaskSlot>
    <TaskSlot $w={61}><svg width="21" height="20" fill="none" stroke="#f2f2f2" strokeWidth="1.300"><path d="M1 5.500h12v9H1zM.6 0v2.500h13V0M.6 20v-2.500h13V20M18.500 0v4M18.500 10v10" /><path d="M17 6h3v3h-3z" fill="#fff" stroke="none" /></svg></TaskSlot>
    <Spacer $w={2} />
    <TaskSlot $w={62}>
      <Tile $s={30} $bg="#4b5a68" $fg="#fff">
        <svg width="30" height="24" viewBox="0 0 30 24" fill="#fff">
          {[-95, -72, -50, -28, -9, 9, 28, 50, 72, 95].map(a => <ellipse key={a} cx="15" cy="7" rx="2.400" ry="6.500" transform={`rotate(${a} 15 15)`} />)}
          <ellipse cx="15" cy="15" rx="4.500" ry="8" stroke="#4b5a68" /><circle cx="13.500" cy="11" r=".8" fill="#4b5a68" /><circle cx="16.500" cy="11" r=".8" fill="#4b5a68" />
        </svg>
      </Tile>
    </TaskSlot>
    <TaskSlot $w={62}><Tile $s={30} $bg="#e44332" $fg="#fff"><svg width="30" height="30" fill="none" stroke="#fff" strokeWidth="2"><path d="M0 9.500l6 4L18.500 6M0 15.500l6 4L18.500 12M0 21.500l6 4L18.500 18" /></svg></Tile></TaskSlot>
    <TaskSlot $w={62}><CalendarTile>31</CalendarTile></TaskSlot>
    <TaskSlot $w={62} $open><Tile $s={30} $bg="#fff" $fg="#0da720"><SiEvernote size={15} /></Tile></TaskSlot>
    <TaskSlot $w={62}><Tile $s={28} $bg="#a90f22" $fg="#f4eeee"><SiMendeley size={22} /></Tile></TaskSlot>
    <TaskSlot $w={62}>
      <svg width="21" height="27" viewBox="0 0 21 27"><rect width="21" height="27" rx="3.500" fill="#858585" /><path d="M0 13L21 17v6.500q0 3.500-3.500 3.500h-14Q0 27 0 23.500z" fill="#555" /><path d="M9 11.500l2 4 4.500.6-3.200 3.200.8 4.500-4.100-2.200-4.100 2.200.8-4.500L2.500 16.100l4.500-.6zM15.500 3l1 2 2.200.3-1.600 1.600.4 2.200-2-1-2 1 .4-2.200-1.600-1.600 2.200-.3z" fill="#3ba0e6" stroke="#e8f4fc" strokeWidth="1.100" /></svg>
    </TaskSlot>
    <TaskSlot $w={62} $open><ChromeLogo /></TaskSlot>
    <Spacer />
    <TaskSlot $w={30}><svg width="17" height="10" fill="none" stroke="#eee" strokeWidth="1.400"><path d="M.7 9l7.600-8 7.600 8" /></svg></TaskSlot>
    <TaskSlot $w={30}><svg width="20" height="14" viewBox="0 0 20 14"><path d="M5 14q-5 0-5-4.500Q0 6 4 5q1.500-5 6-5t6 4.500Q20 5.500 20 9.500 20 14 15.500 14z" fill="#fff" /><path d="M8.500 5.500v5.500M11.800 5.500v5.500" stroke="#2a1a1c" strokeWidth="1.700" /></svg></TaskSlot>
    <TaskSlot $w={30}><svg width="21" height="17" fill="none" stroke="#f0f0f0" strokeWidth="1.300"><path d="M6 1.500h14V13H3V6.500M11.500 13v3M7 16h9M.7.7h4.300v5H.7z" /></svg></TaskSlot>
    <TaskSlot $w={30}><svg width="21" height="18" viewBox="0 0 21 18" fill="none" stroke="#f0f0f0" strokeWidth="1.300"><path d="M1 6h2.500L7.500 2v14L3.500 12H1zM10 6.500q1.300 2.500 0 5M13 4q3 5 0 10" /><path d="M16 1.500q5 7.500 0 15" stroke="#8a8081" /></svg></TaskSlot>
    <TaskSlot $w={30}><svg width="20" height="14" viewBox="0 0 20 14"><path d="M5 4h13v9H4V9" fill="none" stroke="#f0f0f0" strokeWidth="1.200" /><path d="M6 5.500h10.500v6H6zM18 6.500h2v4h-2zM0 2.500h5.500V6q-1 2-2.700 2T0 6zM1 0h1v3H1zM3.500 0h1v3h-1z" fill="#f4f4f4" /></svg></TaskSlot>
    <TrayText $w={46}>ENG<br />IN</TrayText>
    <TrayText $w={90}>10:29<br />21-04-2019</TrayText>
    <Spacer $w={15} />
    <TaskSlot $w={21}><svg width="21" height="21" fill="none" stroke="#f0f0f0" strokeWidth="1.300"><path d="M.7.700h19.400v16H13l-3 3-3-3H.7z" /></svg></TaskSlot>
    <Spacer $w={8} />
    <EdgeLine />
    <Spacer $w={5} />
  </Taskbar>
);

export default function App() {
  return (
    <Screen>
      <Global />
      <Browser />
      <Page>
        <MeetingView />
        <ChatPanel />
      </Page>
      <SystemBar />
    </Screen>
  );
}
